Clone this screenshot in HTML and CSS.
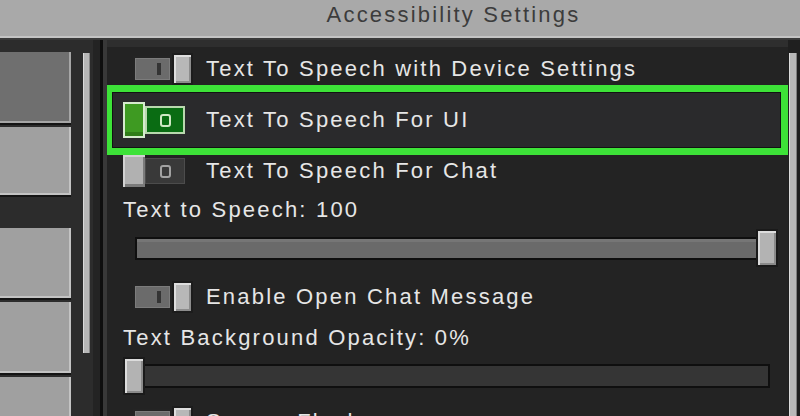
FILE: index.html
```html
<!DOCTYPE html>
<html lang="en">
<head>
  <meta charset="UTF-8" />
  <meta name="viewport" content="width=device-width,initial-scale=1.0" />
  <title>Accessibility Settings</title>
  <link rel="stylesheet" href="styles.css">
</head>

<body>
  <!-- ───────── TOP BAR ───────── -->
  <header class="topbar">
    <div class="topbar-side"></div>
    <h1 class="title">Accessibility Settings</h1>
  </header>

  <div class="screen">
    <!-- ───────── SIDEBAR ───────── -->
    <nav class="sidebar">
      <div class="tabs">
        <div class="tab selected"></div>
        <div class="tab"></div>
        <div class="tab group"></div>
        <div class="tab"></div>
        <div class="tab"></div>
      </div>
      <div class="side-scroll"><div class="thumb"></div></div>
    </nav>

    <div class="divider"></div>

    <!-- ───────── OPTIONS ───────── -->
    <main class="panel">
      <div class="options">
        <div class="row">
          <div class="switch">
            <div class="toggle-a"><span class="track"><i class="bar-mark"></i></span><span class="knob"></span></div>
          </div>
          <span class="label">Text To Speech with Device Settings</span>
        </div>

        <div class="row focus">
          <div class="switch">
            <div class="toggle-b on"><span class="knob"></span><span class="track"><i class="ring"></i></span></div>
          </div>
          <span class="label">Text To Speech For UI</span>
        </div>

        <div class="row">
          <div class="switch">
            <div class="toggle-b"><span class="knob"></span><span class="track"><i class="ring"></i></span></div>
          </div>
          <span class="label">Text To Speech For Chat</span>
        </div>

        <div class="caption">Text to Speech: 100</div>
        <div class="slider">
          <div class="rail full"></div>
          <span class="handle end"></span>
        </div>

        <div class="row gap">
          <div class="switch">
            <div class="toggle-a"><span class="track"><i class="bar-mark"></i></span><span class="knob"></span></div>
          </div>
          <span class="label">Enable Open Chat Message</span>
        </div>

        <div class="caption">Text Background Opacity: 0%</div>
        <div class="slider">
          <div class="rail"></div>
          <span class="handle"></span>
        </div>

        <div class="row last">
          <div class="switch">
            <div class="toggle-a"><span class="track"><i class="bar-mark"></i></span><span class="knob"></span></div>
          </div>
          <span class="label">Screen Flashes</span>
        </div>
      </div>
      <div class="panel-scroll"><div class="thumb"></div></div>
    </main>
  </div>
</body>
</html>
```

FILE: styles.css
```css
:root{
  --txt:#e6e6e6;
  --edge:#141414;
  --green:#3de238;
  font-family:'Liberation Sans',Arial,sans-serif;
}

*,*::before,*::after{box-sizing:border-box;margin:0;padding:0}

html,body{width:800px;height:416px;overflow:hidden;background:#252525}

/* ---------- TOP BAR ---------- */
.topbar{display:flex;height:38px;background:#a9a9a9;border-bottom:2px solid #c4c4c4}
.topbar-side{width:107px}
.title{flex:1;text-align:center;font-size:22px;font-weight:400;line-height:30px;
       letter-spacing:2.2px;color:#3c3c3c}

/* ---------- LAYOUT ---------- */
.screen{display:flex;height:378px;border-top:2px solid #3a3a3a;overflow:hidden}

/* ---------- SIDEBAR ---------- */
.sidebar{display:flex;width:93px;background:#2c2c2c}
.tabs{width:71px;padding-top:12px;display:flex;flex-direction:column;overflow:hidden}
.tab{flex-shrink:0;height:71px;background:#a0a0a0;border-right:2px solid #c3c3c3;border-bottom:2px solid #c3c3c3;
     box-shadow:0 2px 0 var(--edge);margin-bottom:4px}
.tab.selected{background:#6f6f6f;border-color:#a6a6a6}
.tab:nth-child(2){height:68px}
.tab.group{margin-top:29px;height:70px}
.side-scroll{width:22px;padding:13px 3px 0 12px}
.side-scroll .thumb{height:300px;background:#b7b7b7;border-left:1px solid #dadada;border-right:1px solid #858585}

.divider{width:14px;background:#262626;border-left:7px solid #232323;border-right:4px solid #383838;
         box-shadow:inset 3px 0 0 #0e0e0e}

/* ---------- PANEL ---------- */
.panel{flex:1;display:flex;background:#232323;box-shadow:inset 0 7px 0 #2e2e2e}
.options{width:681px;padding-top:13px;display:flex;flex-direction:column;overflow:hidden}
.panel-scroll{flex:1;padding:13px 3px 0 1px;background:#1f1f1f}
.panel-scroll .thumb{height:100%;background:#b8b8b8;border-left:1px solid #dcdcdc;border-right:1px solid #7e7e7e}

.row{display:flex;align-items:center;height:32px;padding-left:16px;flex-shrink:0}
.row.focus{height:70px;margin-left:-2px;padding-left:11px;background:#2a2a2c;
           border:7px solid var(--green);box-shadow:inset 0 0 0 1px #121212}
.row.gap{margin-top:14px}
.row.last{margin-top:11px}
.switch{width:83px;flex-shrink:0}
.label{font-size:22px;letter-spacing:2.2px;color:var(--txt);white-space:nowrap}

.caption{height:24px;line-height:24px;margin-top:11px;padding-left:16px;flex-shrink:0;
         font-size:22px;letter-spacing:2.2px;color:var(--txt);white-space:nowrap}
.caption + .slider{margin-top:7px}
.row.gap + .caption{margin-top:13px}

/* ---------- TOGGLES ---------- */
.toggle-a{display:flex;align-items:center;margin-left:10px}
.toggle-a .track{display:flex;align-items:center;width:39px;height:26px;padding-left:22px;
                 background:#6b6b6b;border:2px solid #242424;box-shadow:inset 0 0 0 1px #7c7c7c}
.bar-mark{display:block;width:4px;height:12px;background:#343434}
.knob{display:block;width:21px;height:32px;background:#b8b8b8;border:2px solid #1c1c1c;
      box-shadow:inset 2px 2px 0 #dedede,inset -2px -2px 0 #8c8c8c}

.toggle-b{display:flex;align-items:center}
.toggle-b .knob{width:22px;height:32px;border:none;background:#b1b1b1;
                box-shadow:inset 2px 2px 0 #d2d2d2,inset -2px -3px 0 #7b7b7b}
.toggle-b .track{display:flex;align-items:center;justify-content:center;width:40px;height:26px;
                 background:#393939;border:1px solid #4c4c4c}
.ring{display:block;width:11px;height:13px;border:2px solid #a2a2a2;border-radius:3px}
.toggle-b.on .knob{height:36px;background:#3e9a22;border:2px solid #d6ebce;
                   box-shadow:inset 0 -4px 0 #2f7d18}
.toggle-b.on .track{height:28px;background:#0a6c13;border:2px solid #b9d8ae}
.toggle-b.on .ring{border-color:#cfe8c4}

/* ---------- SLIDERS ---------- */
.slider{position:relative;height:38px;margin:0 10px 0 16px;flex-shrink:0}
.rail{height:24px;margin:7px 8px 0 12px;background:#353535;border:2px solid #0f0f0f}
.rail.full{height:23px;margin-top:8px;background:#6a6a6a;box-shadow:inset 0 3px 0 #767676}
.handle{position:absolute;top:0;left:0;width:22px;height:38px;background:#b3b3b3;border:2px solid #1a1a1a;
        box-shadow:inset 2px 2px 0 #dcdcdc,inset -2px -2px 0 #8a8a8a}
.handle.end{left:auto;right:0}
```
